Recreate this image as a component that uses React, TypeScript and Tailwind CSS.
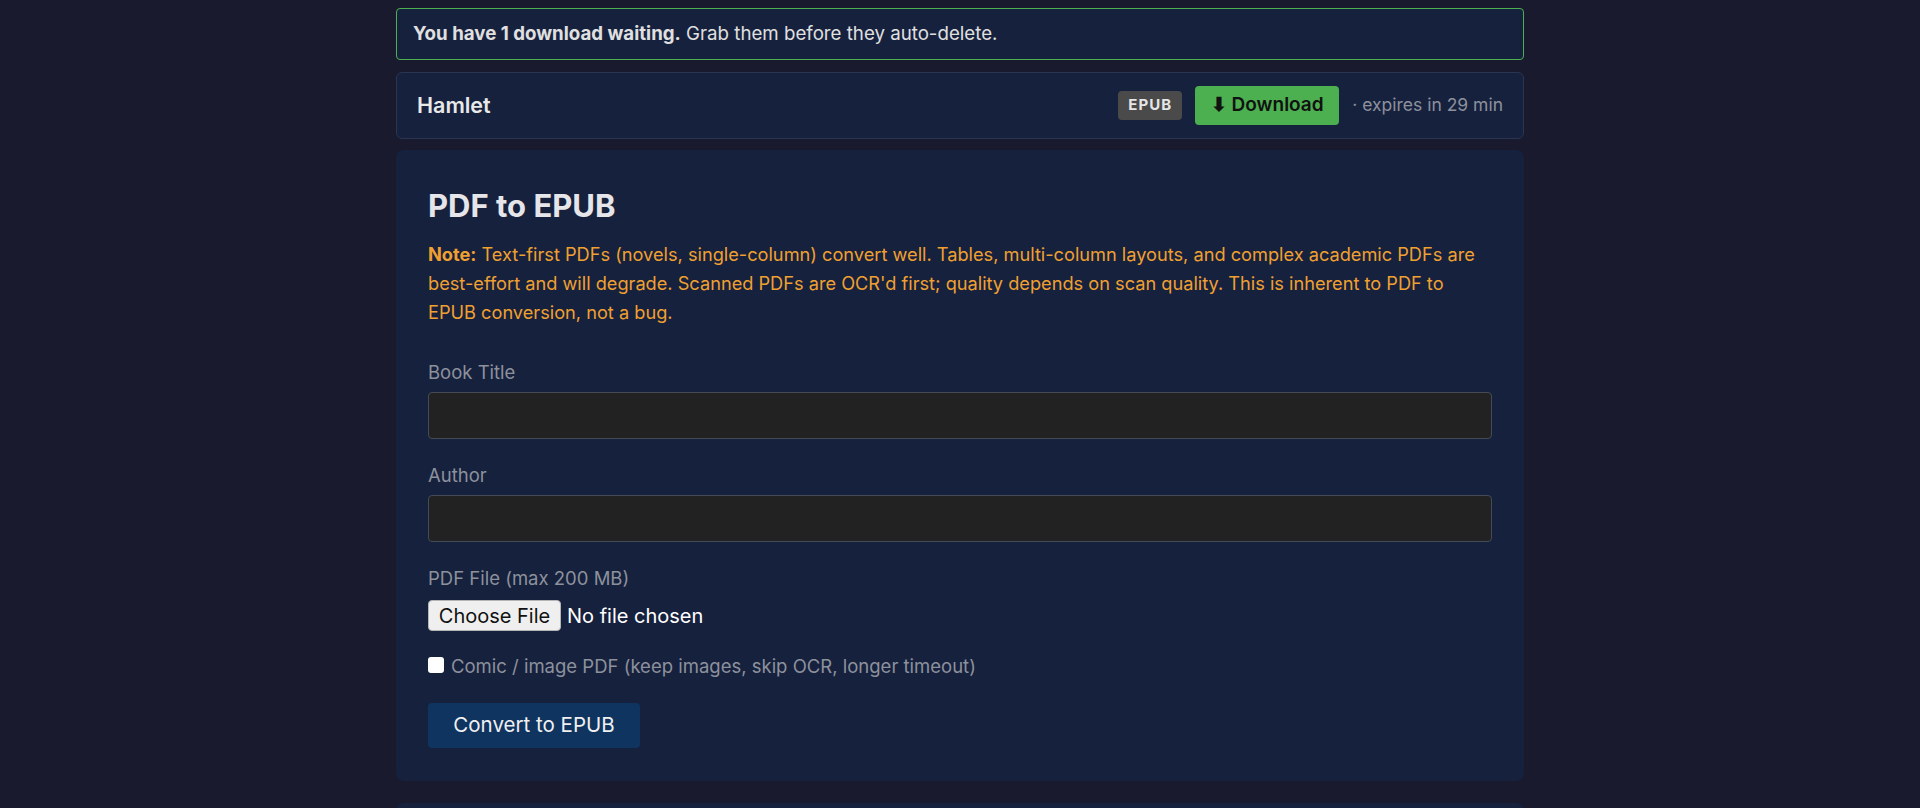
import React from "react";

export default function App() {
  return (
    <div className="min-h-screen bg-[#1a1a2e] font-['Inter','Liberation_Sans',sans-serif] text-[#e0e0e0]">
      <div className="mx-auto flex w-[1128px] flex-col pt-2">
        <div className="rounded-[4px] border border-[#4caf50] bg-[#16213e] px-4 py-3 text-[18.7px] leading-[26px]">
          <span className="font-bold">You have 1 download waiting.</span>{" "}
          Grab them before they auto-delete.
        </div>

        <div className="mt-3 flex items-center justify-between rounded-md border border-[#2a3552] bg-[#16213e] px-5 py-[13px]">
          <span className="text-[21.5px] font-semibold text-[#e8e8e8]">Hamlet</span>
          <div className="flex items-center">
            <span className="flex h-[29px] items-center rounded-[4px] bg-[#4a4a4a] px-[10px] text-[15px] font-bold tracking-[0.07em] text-[#e6e6e6]">
              EPUB
            </span>
            <span className="ml-[13px] flex h-[39px] w-[144px] items-center justify-center rounded-[4px] bg-[#4caf50] text-[19px] font-semibold text-[#111]">
              ⬇ Download
            </span>
            <span className="ml-[13px] text-[17.5px] text-[#8d919c]">· expires in 29 min</span>
          </div>
        </div>

        <div className="mt-[11px] rounded-lg bg-[#16213e] px-8 pb-[33px] pt-[38px]">
          <h2 className="text-[31px] font-bold leading-[36px] text-[#e6e6ea]">PDF to EPUB</h2>
          <p className="mt-4 text-[18.2px] leading-[29px] text-[#f0a030]">
            <span className="font-bold">Note:</span> Text-first PDFs (novels, single-column) convert well. Tables,
            multi-column layouts, and complex academic PDFs are best-effort and will degrade. Scanned PDFs are OCR'd
            first; quality depends on scan quality. This is inherent to PDF to EPUB conversion, not a bug.
          </p>

          <div className="mt-8 flex flex-col">
            <label className="text-[18.5px] leading-[27px] text-[#8d919c]">Book Title</label>
            <div className="mt-[6px] h-[47px] rounded-[4px] border border-[#454a55] bg-[#222222]" />
          </div>
          <div className="mt-[23px] flex flex-col">
            <label className="text-[18.5px] leading-[27px] text-[#8d919c]">Author</label>
            <div className="mt-[6px] h-[47px] rounded-[4px] border border-[#454a55] bg-[#222222]" />
          </div>
          <div className="mt-[23px] flex flex-col">
            <label className="text-[18.5px] leading-[27px] text-[#8d919c]">PDF File (max 200 MB)</label>
            <div className="mt-[8px] flex items-center">
              <span className="flex h-[31px] w-[133px] items-center justify-center rounded-[4px] border border-[#b5b5b5] bg-[#efefef] text-[20px] text-[#111]">
                Choose File
              </span>
              <span className="ml-[6px] text-[20px] text-white">No file chosen</span>
            </div>
          </div>
          <div className="mt-[22px] flex items-center">
            <span className="mb-[3px] h-[16px] w-[16px] rounded-[3px] bg-white" />
            <span className="ml-[7px] text-[18.5px] leading-[27px] text-[#8d919c]">
              Comic / image PDF (keep images, skip OCR, longer timeout)
            </span>
          </div>
          <button className="mt-[23px] h-[45px] w-[212px] rounded-[4px] bg-[#0f3460] text-[20.5px] text-[#f0f0f0]">
            Convert to EPUB
          </button>
        </div>

        <div className="mt-[22px] h-20 rounded-lg bg-[#16213e]" />
      </div>
    </div>
  );
}
